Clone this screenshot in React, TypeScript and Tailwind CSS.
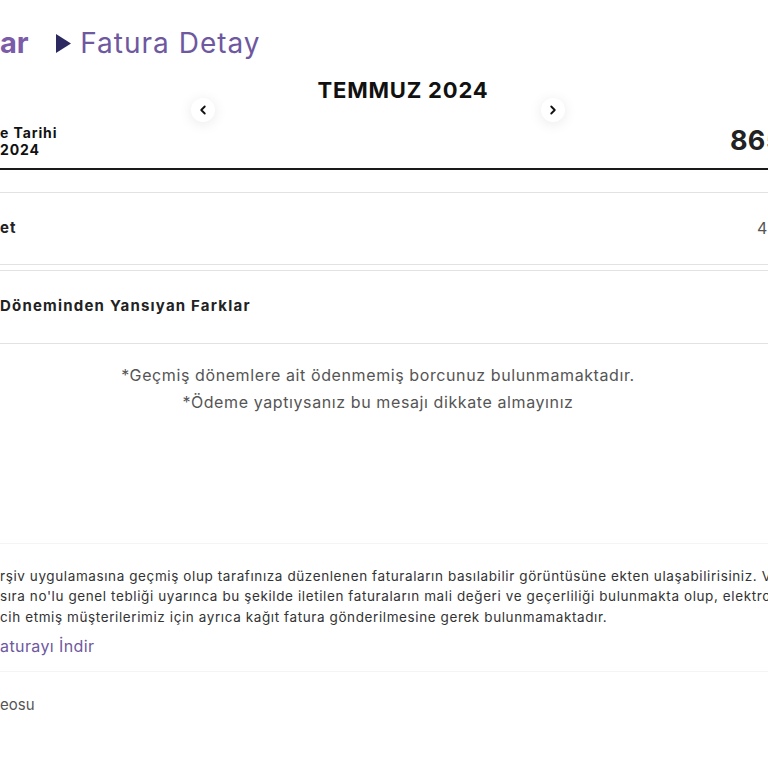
import { ChevronLeft, ChevronRight } from 'lucide-react'

function ArrowButton({ dir }: { dir: 'left' | 'right' }) {
  return (
    <button
      type="button"
      className="flex h-[24px] w-[24px] items-center justify-center rounded-full bg-white shadow-[0_2px_14px_rgba(0,0,0,0.09)]"
    >
      {dir === 'left' ? (
        <ChevronLeft size={14} strokeWidth={3.2} className="text-[#111]" />
      ) : (
        <ChevronRight size={14} strokeWidth={3.2} className="text-[#111]" />
      )}
    </button>
  )
}

export default function App() {
  return (
    <div
      className="h-[768px] w-[768px] overflow-hidden bg-white text-[#1c1c1c]"
      style={{ fontFamily: 'Inter, "Noto Sans", sans-serif' }}
    >
      {/* breadcrumb */}
      <div className="flex items-center pt-[25px] leading-[36px]">
        <span className="text-[29px] font-bold tracking-[-0.2px] text-[#7a5ca8]">ar</span>
        <svg width="15" height="19" viewBox="0 0 15 19" className="ml-[28px]">
          <polygon points="0,0 15,9.5 0,19" fill="#2b2960" />
        </svg>
        <span className="ml-[9px] text-[28px] tracking-[1px] text-[#6e58a0]">Fatura Detay</span>
      </div>

      {/* month selector */}
      <div className="mr-[12px] mt-[15px] pl-[50px] text-center text-[22px] font-bold leading-[28px] tracking-[0.8px] text-[#111]">
        TEMMUZ 2024
      </div>
      <div className="mr-[12px] -mt-[6px] flex justify-center gap-[326px]">
        <ArrowButton dir="left" />
        <ArrowButton dir="right" />
      </div>

      {/* due date / total */}
      <div className="-mt-[1px] flex items-center border-b-2 border-[#1a1a1a] pb-[6px]">
        <div className="text-[14px] font-bold leading-[17px] tracking-[0.9px] text-[#111]">
          <div>e Tarihi</div>
          <div>2024</div>
        </div>
        <div className="ml-auto w-[38px] whitespace-nowrap text-[27px] font-bold tracking-[0.3px] text-[#222]">
          865,40 TL
        </div>
      </div>

      {/* rows */}
      <div className="mt-[22px] flex h-[73px] items-center border-y border-[#e2e2e2]">
        <span className="text-[15px] font-bold tracking-[1px] text-[#222]">et</span>
        <span className="ml-auto w-[11px] whitespace-nowrap text-[16px] text-[#555]">4</span>
      </div>
      <div className="mt-[5px] flex h-[74px] items-center border-y border-[#e2e2e2]">
        <span className="text-[15px] font-bold tracking-[1.2px] text-[#222]">
          Döneminden Yansıyan Farklar
        </span>
      </div>

      {/* notice */}
      <div className="mr-[12px] mt-[18px] text-center text-[16px] leading-[27px] tracking-[0.6px] text-[#555]">
        <p>*Geçmiş dönemlere ait ödenmemiş borcunuz bulunmamaktadır.</p>
        <p>*Ödeme yaptıysanız bu mesajı dikkate almayınız</p>
      </div>

      {/* e-arşiv info */}
      <div className="mt-[127px] border-t border-[#f4f4f4] pt-[22px]">
        <div className="whitespace-nowrap text-[13.5px] leading-[20.5px] tracking-[0.6px] text-[#333]">
          <p>
            rşiv uygulamasına geçmiş olup tarafınıza düzenlenen faturaların basılabilir görüntüsüne ekten
            ulaşabilirisiniz. Vergi
          </p>
          <p>
            sıra no'lu genel tebliği uyarınca bu şekilde iletilen faturaların mali değeri ve geçerliliği
            bulunmakta olup, elektronik
          </p>
          <p>cih etmiş müşterilerimiz için ayrıca kağıt fatura gönderilmesine gerek bulunmamaktadır.</p>
        </div>
        <div className="mt-[7px] text-[16px] leading-[24px] tracking-[0.4px] text-[#6e58a0]">aturayı İndir</div>
      </div>

      <div className="mt-[13px] border-t border-[#f4f4f4] pt-[21px] text-[15px] leading-[24px] tracking-[0px] text-[#555]">
        eosu
      </div>
    </div>
  )
}
